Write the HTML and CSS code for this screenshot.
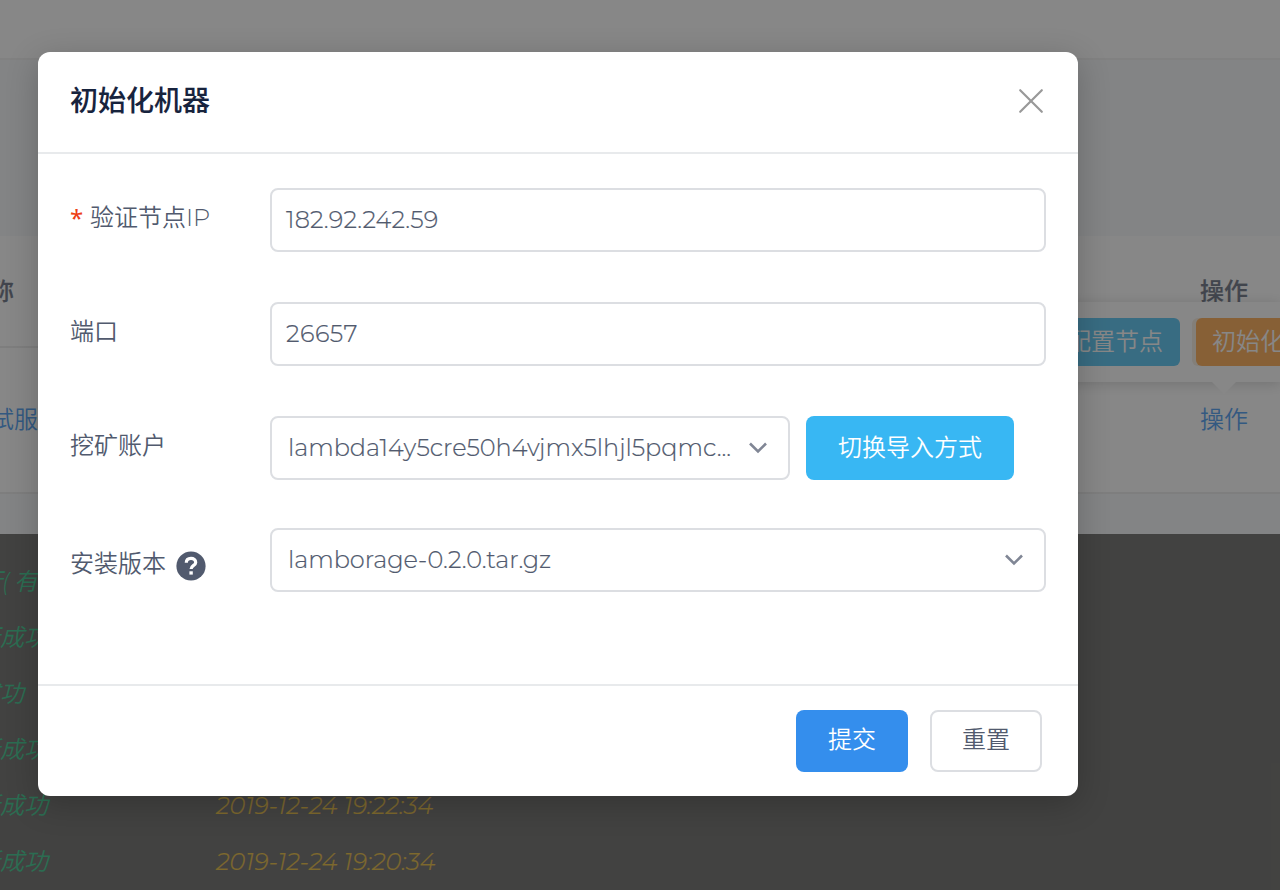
FILE: index.html
```
<!DOCTYPE html>
<html lang="zh-CN">
<head>
<meta charset="utf-8">
<title>初始化机器</title>
<link rel="stylesheet" href="styles.css">
</head>
<body>
<div class="page">
  <div class="topbar"></div>
  <div class="band"></div>
  <div class="row row-head"><div class="name-head">名称</div><div class="op-head">操作</div></div>
  <div class="row row-item"><div class="name-item">测试服</div><div class="op-item">操作</div></div>
  <div class="gap-band"></div>
  <div class="terminal">
    <div class="log"><span class="msg m-a">行( 有</span></div>
    <div class="log"><span class="msg m-b">行成功</span></div>
    <div class="log"><span class="msg m-c">成功</span></div>
    <div class="log"><span class="msg m-b">新成功</span></div>
    <div class="log"><span class="msg m-b">新成功</span><span class="time">2019-12-24 19:22:34</span></div>
    <div class="log"><span class="msg m-b">新成功</span><span class="time">2019-12-24 19:20:34</span></div>
  </div>
  <div class="popover"><div class="pop-btn pop-info">配置节点</div><div class="pop-btn pop-warn">初始化</div></div>
  <div class="arrow"></div>
</div>
<div class="mask">
  <div class="modal">
    <div class="modal-head">
      <div class="title">初始化机器</div>
      <svg class="close" width="26" height="26" viewBox="0 0 26 26"><path d="M2.2 2.2 23.8 23.8M23.8 2.2 2.2 23.8"/></svg>
    </div>
    <div class="modal-body">
      <div class="field"><div class="label"><span class="star">*</span>验证节点<span class="ip">IP</span></div><div class="box"><span class="value">182.92.242.59</span></div></div>
      <div class="field"><div class="label">端口</div><div class="box"><span class="value value-port">26657</span></div></div>
      <div class="field"><div class="label">挖矿账户</div>
        <div class="box select select-short"><span class="option">lambda14y5cre50h4vjmx5lhjl5pqmc...</span><svg class="chev" width="20" height="12" viewBox="0 0 20 12"><path d="M2 1.5 10 9.5 18 1.5"/></svg></div>
        <div class="switch">切换导入方式</div>
      </div>
      <div class="field field-last"><div class="label label-ver">安装版本<svg class="help" width="30" height="30" viewBox="0 0 30 30"><circle cx="15" cy="15" r="14.6"/><path d="M10.3 11.8C10.3 8.9 12.3 7.4 15 7.4S19.7 9 19.7 11.5C19.7 14.5 15.1 14.4 15.1 18.1"/><rect x="13.4" y="20.3" width="3.4" height="3.3"/></svg></div>
        <div class="box select"><span class="option">lamborage-0.2.0.tar.gz</span><svg class="chev" width="20" height="12" viewBox="0 0 20 12"><path d="M2 1.5 10 9.5 18 1.5"/></svg></div>
      </div>
    </div>
    <div class="modal-foot"><div class="btn btn-primary">提交</div><div class="btn btn-plain">重置</div></div>
  </div>
</div>
</body>
</html>
```
FILE: styles.css
```
* { box-sizing: border-box; }
html { overflow: hidden; }
body {
  margin: 0; width: 1280px; height: 890px; overflow: hidden; position: relative;
  font: 350 24px/36px Montserrat, "Noto Sans CJK SC", sans-serif;
  color: #515a6e;
}
.page { height: 890px; background: #fff; display: flex; flex-direction: column; overflow: hidden; }
.topbar { height: 60px; border-bottom: 2px solid #f0f0f0; }
.band { height: 176px; background: #f5f7f9; }
.row { display: flex; justify-content: space-between; border-bottom: 2px solid #e8e8e8; }
.row-head { height: 112px; padding-top: 38px; font-weight: 500; -webkit-text-stroke: .2px; }
.row-item { height: 146px; padding-top: 54px; color: #2d8cf0; }
.name-head, .name-item { display: flex; justify-content: flex-end; white-space: nowrap; }
.name-head { width: 14px; }
.name-item { width: 38px; }
.op-head, .op-item { width: 80px; }
.gap-band { height: 40px; background: #f5f7f9; }
.terminal { flex: 1; background: #545450; padding-top: 20px; font-style: italic; }
.log { height: 56px; display: flex; align-items: center; }
.msg { display: flex; justify-content: flex-end; white-space: pre; color: #19be7c; }
.m-a { width: 38px; word-spacing: -2px; }
.m-b { width: 48px; }
.m-c { width: 24px; }
.time { margin-left: 168px; color: #e6b41e; white-space: nowrap; font-weight: 300; letter-spacing: .12px; -webkit-text-stroke: .2px; }
.popover {
  position: absolute; left: 900px; top: 302px; width: 380px; height: 80px; padding: 16px 0;
  display: flex; gap: 16px; background: #fff; box-shadow: 0 2px 12px rgba(0,0,0,.2); color: #fff;
}
.pop-btn { height: 48px; line-height: 47px; border-radius: 6px; padding: 0 16px; white-space: nowrap; }
.pop-info { width: 280px; padding-right: 17px; text-align: right; background: #3bbbf2; }
.pop-warn { width: 84px; overflow: hidden; border-radius: 6px 0 0 6px; background: #ff9d35; box-shadow: -4px 0 0 #f6eadb; }
.arrow { position: absolute; left: 1211px; top: 381px; width: 26px; height: 13px; background: #fff; clip-path: polygon(0 0, 100% 0, 50% 100%); }
.mask { position: absolute; inset: 0; padding: 52px 0 0 38px; background: rgba(55,55,55,.6); }
.modal { width: 1040px; height: 744px; display: flex; flex-direction: column; background: #fff; border-radius: 12px; box-shadow: 0 8px 32px rgba(0,0,0,.22); }
.modal-head { height: 102px; padding: 0 34px 2px 32px; display: flex; align-items: center; justify-content: space-between; border-bottom: 2px solid #e8eaec; }
.title { font-size: 28px; font-weight: 500; line-height: 40px; color: #17233d; -webkit-text-stroke: .1px #17233d; }
.close { fill: none; stroke: #999; stroke-width: 2.2; stroke-linecap: round; }
.modal-body { flex: 1; padding: 34px 32px 0; }
.field { height: 64px; margin-bottom: 50px; display: flex; }
.field-last { margin-top: -2px; }
.label { width: 200px; height: 60px; display: flex; align-items: center; white-space: nowrap; }
.label-ver { height: 72px; }
.star { width: 20px; color: #ed4014; font-family: "Noto Sans", sans-serif; font-weight: 400; }
.ip { font-weight: 300; }
.help { margin: 4px 0 0 10px; fill: #515a6e; }
.help path { fill: none; stroke: #fff; stroke-width: 3.2; }
.help rect { fill: #fff; }
.box { flex: 1; height: 64px; border: 2px solid #dcdee2; border-radius: 8px; padding: 0 14px; display: flex; align-items: center; white-space: nowrap; }
.select { padding: 0 20px 0 16px; justify-content: space-between; }
.select-short { flex: none; width: 520px; }
.value { font-weight: 300; letter-spacing: .16px; -webkit-text-stroke: .2px; }
.value-port { letter-spacing: .5px; }
.option { font-weight: 300; letter-spacing: -.03px; -webkit-text-stroke: .2px; }
.chev { fill: none; stroke: #808695; stroke-width: 2.6; }
.switch { width: 208px; height: 64px; margin-left: 16px; border-radius: 8px; background: #38b7f3; color: #fff; text-align: center; line-height: 64px; }
.modal-foot { height: 112px; border-top: 2px solid #e8eaec; padding: 24px 36px 0; display: flex; justify-content: flex-end; gap: 22px; }
.btn { width: 112px; height: 62px; border-radius: 8px; text-align: center; line-height: 60px; }
.btn-primary { background: #348eed; color: #fff; }
.btn-plain { border: 2px solid #dcdee2; line-height: 56px; }
```
